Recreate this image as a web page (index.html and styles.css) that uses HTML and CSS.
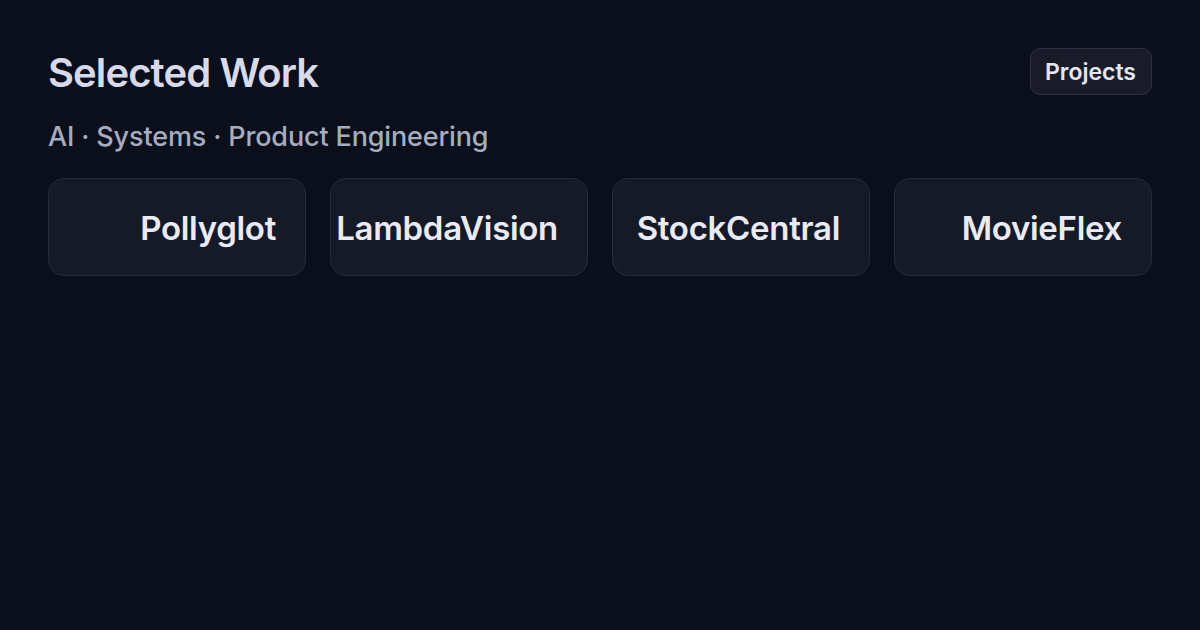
FILE: index.html
```html
<!DOCTYPE html>
<html>
<head>
<meta charset="utf-8">
<link rel="stylesheet" href="styles.css">
</head>
<body>
<main class="page">
  <header class="top">
    <div class="heading">
      <h1 class="title">Selected Work</h1>
      <p class="subtitle">AI · Systems · Product Engineering</p>
    </div>
    <span class="badge">Projects</span>
  </header>
  <section class="cards">
    <div class="card"><span class="name">Pollyglot</span></div>
    <div class="card"><span class="name">LambdaVision</span></div>
    <div class="card"><span class="name">StockCentral</span></div>
    <div class="card"><span class="name">MovieFlex</span></div>
  </section>
</main>
</body>
</html>
```
FILE: styles.css
```css
* { box-sizing: border-box; }
html, body {
  margin: 0;
  width: 1200px;
  height: 630px;
  background: #0b0f1c;
  font-family: Inter, "Noto Sans", sans-serif;
  overflow: hidden;
}
.page {
  padding: 48px 48px;
}
.top {
  display: flex;
  justify-content: space-between;
  align-items: flex-start;
}
.title {
  margin: 0;
  font-size: 40px;
  font-weight: 600;
  color: #d6daea;
  line-height: 50px;
  letter-spacing: -0.9px;
}
.subtitle {
  margin: 22px 0 0;
  font-size: 27px;
  font-weight: 500;
  color: #a7acbf;
  line-height: 33px;
  letter-spacing: -0.15px;
}
.badge {
  display: inline-flex;
  align-items: center;
  height: 47px;
  padding: 0 15px 0 14px;
  border: 1px solid #2c303d;
  border-radius: 10px;
  background: #191c28;
  color: #e4e7f3;
  font-size: 23px;
  font-weight: 600;
}
.cards {
  display: grid;
  grid-template-columns: repeat(4, minmax(0, 1fr));
  gap: 24px;
  margin-top: 25px;
}
.card {
  height: 98px;
  display: flex;
  align-items: center;
  justify-content: flex-end;
  padding: 2px 29px 0;
  background: #161a26;
  border: 1px solid #282c39;
  border-radius: 16px;
  overflow: visible;
}
.name {
  white-space: nowrap;
  color: #e8eaf6;
  font-size: 33px;
  font-weight: 600;
  letter-spacing: -0.3px;
}
```
